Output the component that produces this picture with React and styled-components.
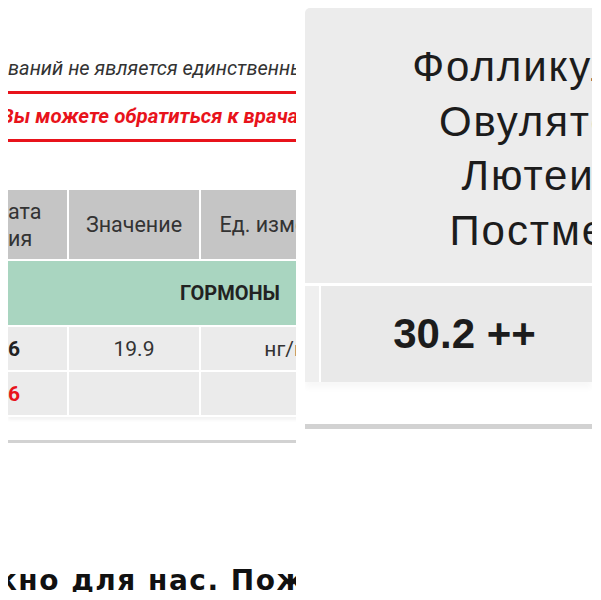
import React from "react";
import styled, { createGlobalStyle } from "styled-components";

const GlobalStyle = createGlobalStyle`
  body {
    margin: 0;
    background: #ffffff;
    font-family: Roboto, "Noto Sans", sans-serif;
    color: #333333;
  }
`;

const hormones = [
  { date: "6", value: "19.9", unit: "нг/мл", red: false },
  { date: "6", value: "", unit: "", red: true },
];

// референсные значения ЛГ по фазам цикла
const phases = [
  { name: "Фолликулярная фаза", range: "1,9-12,5" },
  { name: "Овуляторная фаза", range: "8,7-76,3" },
  { name: "Лютеиновая фаза", range: "0,5-6,9" },
  { name: "Постменопауза", range: "15,9-154,0" },
];

const App = () => {
  return (
    <>
      <GlobalStyle />
      <Page>
        <LeftPanel>
          <Notice>ваний не является единственным критерием диагноза</Notice>
          <Warning>Вы можете обратиться к врачам клиники</Warning>
          <ResultTable>
            <HeadCell $align="left">
              ата
              <br />
              ия
            </HeadCell>
            <HeadCell>Значение</HeadCell>
            <HeadCell>Ед. измерения</HeadCell>
            <HeadCell>Норма</HeadCell>
            <GroupCell>ГОРМОНЫ</GroupCell>
            {hormones.map((row, i) => (
              <React.Fragment key={i}>
                <DateCell $red={row.red}>{row.date}</DateCell>
                <DataCell>{row.value}</DataCell>
                <DataCell>{row.unit}</DataCell>
                <DataCell />
              </React.Fragment>
            ))}
          </ResultTable>
          <Divider />
          <Heading>жно для нас. Пожалуйста, оцените</Heading>
        </LeftPanel>

        <RightPanel>
          <RangeCell>
            {phases.map((p) => (
              <RangeLine key={p.name}>
                {p.name} {p.range}
              </RangeLine>
            ))}
          </RangeCell>
          <ValueRow>
            <StubCell />
            <ValueCell>30.2 ++</ValueCell>
          </ValueRow>
          <Divider $thick />
        </RightPanel>
      </Page>
    </>
  );
};

export default App;

const Page = styled.div`
  display: flex;
  gap: 9px;
  padding: 8px;
  width: 601px;
  height: 600px;
  box-sizing: border-box;
  overflow: hidden;
`;

const LeftPanel = styled.div`
  flex: 0 0 288px;
  overflow: hidden;
  display: flex;
  flex-direction: column;
`;

const Notice = styled.div`
  margin-top: 50px;
  font-size: 20px;
  line-height: 20px;
  font-style: italic;
  color: #333333;
  white-space: nowrap;
`;

const Warning = styled.div`
  margin-top: 13px;
  border-top: 3px solid #e8131b;
  border-bottom: 3px solid #e8131b;
  height: 45px;
  line-height: 45px;
  font-size: 20.5px;
  font-weight: 700;
  font-style: italic;
  color: #e8131b;
  white-space: nowrap;
  text-indent: -7px;
`;

const ResultTable = styled.div`
  margin-top: 48px;
  display: grid;
  grid-template-columns: 59px 130px 184px 65px;
  grid-template-rows: 69px 64px 43px 43px;
  gap: 2px;
  width: max-content;
  box-shadow: 0 3px 3px rgba(0, 0, 0, 0.05);
  padding-bottom: 2px;
`;

const HeadCell = styled.div`
  background: #c5c5c5;
  display: flex;
  align-items: center;
  justify-content: ${(p) => (p.$align === "left" ? "flex-start" : "center")};
  font-size: 21.5px;
  line-height: 27px;
  color: #333333;
  white-space: nowrap;
  overflow: hidden;
`;

const GroupCell = styled.div`
  grid-column: 1 / -1;
  background: #a9d5c0;
  display: flex;
  align-items: center;
  justify-content: center;
  font-size: 20px;
  font-weight: 700;
  color: #222222;
`;

const DataCell = styled.div`
  background: #ebebeb;
  display: flex;
  align-items: center;
  justify-content: center;
  font-size: 21px;
  color: #333333;
  white-space: nowrap;
`;

const DateCell = styled(DataCell)`
  justify-content: flex-start;
  font-weight: 700;
  color: ${(p) => (p.$red ? "#e8131b" : "#222222")};
`;

const Divider = styled.div`
  margin-top: ${(p) => (p.$thick ? "42px" : "23px")};
  height: ${(p) => (p.$thick ? "5px" : "3px")};
  background: #d2d2d2;
  flex-shrink: 0;
`;

const Heading = styled.div`
  margin-top: 121px;
  font-family: "DejaVu Sans", "Liberation Sans", sans-serif;
  font-size: 28px;
  line-height: 33px;
  font-weight: 700;
  letter-spacing: 1.5px;
  color: #111111;
  white-space: nowrap;
  text-indent: -19px;
`;

const RightPanel = styled.div`
  flex: 0 0 287px;
  overflow: hidden;
  display: flex;
  flex-direction: column;
`;

const RangeCell = styled.div`
  height: 275px;
  box-sizing: border-box;
  padding-top: 32px;
  background: #ececec;
  border-radius: 5px 0 0 0;
  display: flex;
  flex-direction: column;
  align-items: center;
  width: 849px;
`;

const RangeLine = styled.div`
  font-family: "Liberation Sans", Arial, sans-serif;
  font-size: 42px;
  line-height: 54.5px;
  letter-spacing: 1.9px;
  color: #1c1c1c;
  white-space: nowrap;
`;

const ValueRow = styled.div`
  margin-top: 3px;
  display: flex;
  gap: 2px;
  height: 96px;
  box-shadow: 0 6px 6px rgba(0, 0, 0, 0.03);
`;

const StubCell = styled.div`
  flex: 0 0 14px;
  background: #efefef;
`;

const ValueCell = styled.div`
  flex: 0 0 287px;
  background: #e9e9e9;
  display: flex;
  align-items: center;
  justify-content: center;
  font-family: "Liberation Sans", Arial, sans-serif;
  font-size: 42px;
  font-weight: 700;
  color: #1c1c1c;
`;
